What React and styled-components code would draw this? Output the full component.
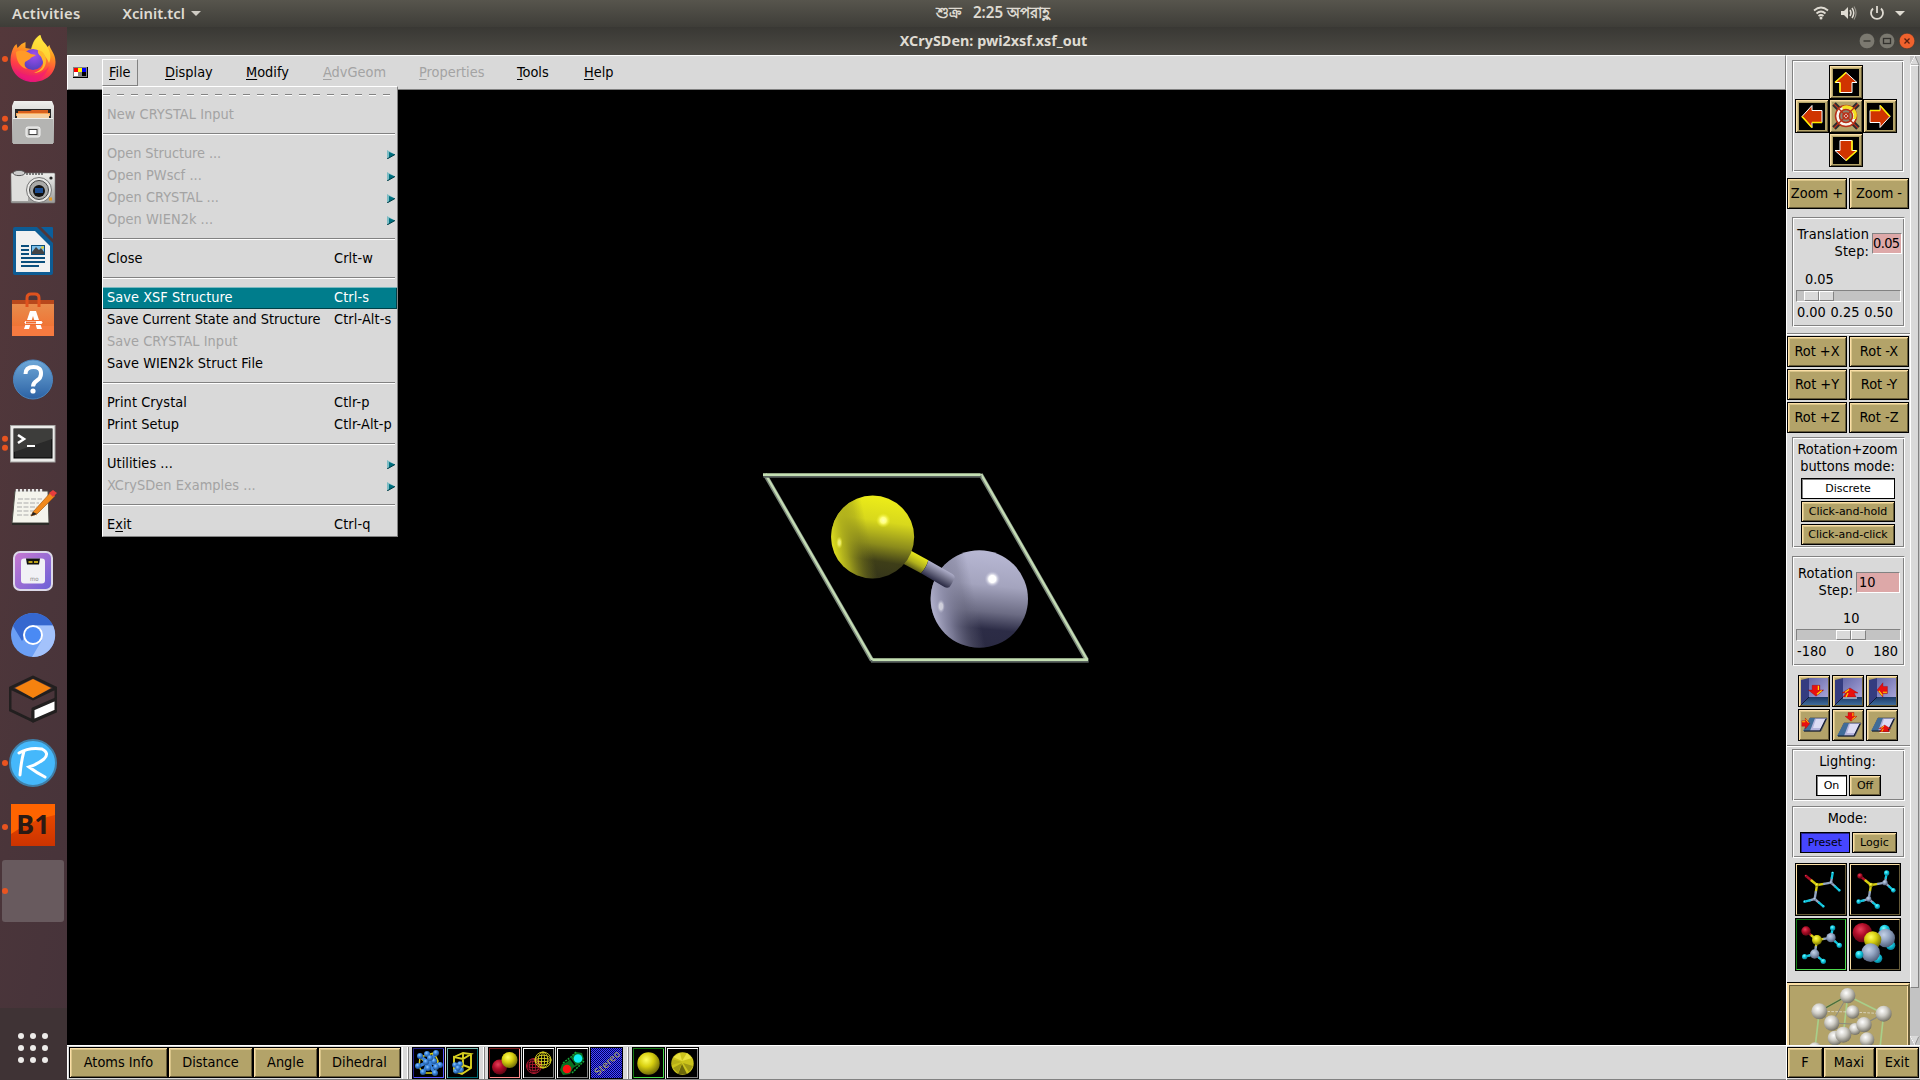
import React from "react";
import styled, { createGlobalStyle, css } from "styled-components";

const GREY = "#d9d9d9";
const SHADE = "#828282";
const TAN = "#b3a369";
const UI = `"DejaVu Sans Condensed", "DejaVu Sans", sans-serif`;
const SMALL = `"DejaVu Sans", sans-serif`;
const SHELL = `"Noto Sans", "Open Sans", sans-serif`;

const Global = createGlobalStyle`
  * { box-sizing: border-box; }
  html, body { margin: 0; padding: 0; background: #000; overflow: hidden; }
  svg { display: block; }
`;

const Screen = styled.div`
  width: 1920px;
  height: 1080px;
  display: flex;
  flex-direction: column;
  overflow: hidden;
  background: #000;
  font: 14.4px ${UI};
  font-stretch: condensed;
  color: #000;
  white-space: nowrap;
`;

/* ---------- shell ---------- */
const TopBar = styled.header`
  height: 27px;
  flex: none;
  display: grid;
  grid-template-columns: 1fr auto 1fr;
  align-items: center;
  background: linear-gradient(#57554d, #3e3d38);
  color: #dfdbd2;
  font: 600 14.8px/27px ${SHELL};
`;
const TopLeft = styled.div`
  display: flex;
  align-items: center;
  padding-left: 12px;
  gap: 42px;
  letter-spacing: 0.25px;
`;
const AppName = styled.span`
  display: flex;
  align-items: center;
  gap: 6px;
  letter-spacing: 0;
`;
const Clock = styled.div`
  display: flex;
  gap: 11px;
  padding-left: 66px;
  font-size: 15.2px;
  line-height: 24px;
  height: 27px;
`;
const TopRight = styled.div`
  display: flex;
  justify-content: flex-end;
  align-items: center;
  padding-right: 14px;
`;

const Body = styled.div`
  flex: 1;
  min-height: 0;
  display: flex;
`;
const Dock = styled.nav`
  width: 67px;
  flex: none;
  display: flex;
  flex-direction: column;
  background: linear-gradient(100deg, #54383b, #4a353a 60%, #46333a);
`;
const DockSlot = styled.div`
  position: relative;
  height: 64px;
  display: flex;
  justify-content: center;
  align-items: center;
  padding-right: 1px;
`;
const ActiveTile = styled.div`
  width: 62px;
  height: 62px;
  border-radius: 3px;
  background: #685a5e;
`;
const Dots = styled.div`
  position: absolute;
  left: 2px;
  top: 50%;
  transform: translateY(-50%);
  display: flex;
  flex-direction: column;
  gap: 2.5px;
`;
const Dot = styled.i`
  width: 6px;
  height: 6px;
  border-radius: 50%;
  background: #e95420;
`;
const AppsButton = styled.div`
  margin-top: auto;
  height: 72px;
  background: #3f3335;
  display: grid;
  grid-template-columns: repeat(3, 6px);
  grid-auto-rows: 6px;
  gap: 6px;
  justify-content: center;
  padding: 25px 1px 0 0;
`;
const AppsDot = styled.i`
  border-radius: 50%;
  background: #eeecea;
`;

/* ---------- window ---------- */
const Window = styled.main`
  flex: 1;
  min-width: 0;
  display: flex;
  flex-direction: column;
`;
const TitleBar = styled.div`
  height: 28px;
  flex: none;
  display: grid;
  grid-template-columns: 1fr auto 1fr;
  align-items: center;
  background: linear-gradient(#393834, #4c4a44);
  color: #dfdbd2;
  font: 700 14.4px/28px ${SHELL};
`;
const Title = styled.span`
  grid-column: 2;
`;
const WindowButtons = styled.div`
  display: flex;
  gap: 4px;
  justify-content: flex-end;
  padding-right: 5px;
`;
const Work = styled.div`
  flex: 1;
  min-height: 0;
  display: flex;
`;
const Left = styled.div`
  width: 1719px;
  display: flex;
  flex-direction: column;
`;
const MenuBar = styled.div`
  height: 35px;
  display: flex;
  align-items: flex-start;
  padding: 3px 0 0 5px;
  background: ${GREY};
  border: 1px solid;
  border-color: #fff ${SHADE} ${SHADE} #fff;
`;
const FlagBox = styled.div`
  padding-top: 8px;
  width: 29px;
`;
const MenuItem = styled.div`
  position: relative;
  height: 27px;
  margin-right: 20px;
  width: ${(p) => p.$w}px;
  padding-left: 6px;
  line-height: 25px;
  border: 1px solid;
  border-color: ${(p) => (p.$open ? `#fff ${SHADE} ${SHADE} #fff` : "transparent")};
  color: ${(p) => (p.$off ? "#a3a3a3" : "#000")};
`;
const Under = styled.span`
  text-decoration: underline;
  text-decoration-thickness: 1px;
  text-underline-offset: 2px;
  text-decoration-skip-ink: none;
`;
const DropDown = styled.div`
  position: absolute;
  z-index: 5;
  left: -1px;
  top: 26px;
  width: 296px;
  background: ${GREY};
  border: 1px solid;
  border-color: #fff ${SHADE} ${SHADE} #fff;
  color: #000;
`;
const Tear = styled.div`
  height: 17px;
  padding-top: 7px;
  &::before {
    content: "";
    display: block;
    width: 292px;
    height: 2px;
    background:
      repeating-linear-gradient(90deg, ${SHADE} 0 7px, transparent 7px 14px) 0 0 / 100% 1px no-repeat,
      repeating-linear-gradient(90deg, #fff 0 7px, transparent 7px 14px) 0 1px / 100% 1px no-repeat;
  }
`;
const Sep = styled.div`
  height: 17px;
  padding-top: 7px;
  &::before {
    content: "";
    display: block;
    width: 292px;
    height: 2px;
    background: linear-gradient(${SHADE} 50%, #fff 50%);
  }
`;
const Row = styled.div`
  height: 22px;
  display: grid;
  grid-template-columns: 227px 1fr auto;
  align-items: center;
  line-height: 20px;
  padding: 0 2px 2px 4px;
  color: ${(p) => (p.$off ? "#a3a3a3" : "#000")};
  ${(p) =>
    p.$sel &&
    css`
      background: #007d8c;
      color: #fff;
      box-shadow: inset 0 1px #79b9c0, inset -1px -1px #003f47;
    `}
`;
const RowLabel = styled.span`
  letter-spacing: ${(p) => (p.$tight ? -0.07 : 0.05)}px;
`;
const RowKey = styled.span`
  letter-spacing: 0.1px;
`;
const Canvas = styled.div`
  flex: 1;
  background: #000;
  padding: 360px 0 0 673px;
`;
const BottomBar = styled.footer`
  height: 35px;
  display: flex;
  background: ${GREY};
  border-top: 1px solid #fff;
  border-bottom: 1px solid ${SHADE};
  padding-top: 1px;
`;
const TextTools = styled.div`
  display: flex;
  width: 336px;
  padding-left: 1px;
  border-left: 1px solid #fff;
  border-right: 1px solid #fff;
`;
const IconTools = styled.div`
  display: flex;
  gap: 1px;
`;
const Divider = styled.div`
  width: 2px;
  margin: 0 3px 0 4px;
  background: linear-gradient(90deg, #fff 50%, ${SHADE} 50%);
`;

/* ---------- buttons ---------- */
const bevel = css`
  border: 1px solid #000;
  box-shadow: inset 1px 1px #fbdfa6, inset -1px -1px #665b38, inset 2px 2px #d8c489;
`;
const Btn = styled.button`
  ${bevel}
  flex: none;
  padding: 0 0 ${(p) => (p.$small ? 0 : 2)}px;
  margin: 0;
  width: ${(p) => p.$w}px;
  height: ${(p) => (p.$small ? 21 : 31)}px;
  font: ${(p) => (p.$small ? `11px ${SMALL}` : `14.4px ${UI}`)};
  font-stretch: ${(p) => (p.$small ? "normal" : "condensed")};
  background: ${(p) => p.$bg || TAN};
  color: #000;
  ${(p) => p.$bg && `box-shadow: inset 1px 1px ${p.$bg === "#fff" ? SHADE : "#24248c"};`}
`;
const IconBtn = styled.button`
  ${bevel}
  flex: none;
  display: flex;
  justify-content: center;
  align-items: center;
  padding: 0;
  width: ${(p) => p.$s}px;
  height: ${(p) => p.$s}px;
  background: ${TAN};
`;
const ToolBtn = styled.button`
  flex: none;
  padding: 0;
  width: 33px;
  height: 32px;
  display: flex;
  align-items: center;
  justify-content: center;
  border: 1px solid #000;
  background: #000;
  box-shadow: inset 1px 1px ${(p) => p.$a}, inset -1px -1px ${(p) => p.$b};
`;
const Tile = styled.button`
  padding: 0;
  width: 52px;
  height: 53px;
  border: 1px solid #000;
  background: #000;
  position: relative;
  &::after {
    content: "";
    position: absolute;
    inset: 0;
    border: 1px solid;
    border-color: ${(p) => (p.$on ? "#147814 #4cda4c #4cda4c #147814" : "#fbdfa6 #665b38 #665b38 #fbdfa6")};
  }
`;

/* ---------- side panel ---------- */
const Side = styled.aside`
  flex: 1;
  background: ${GREY};
  border-top: 1px solid #fff;
  border-left: 1px solid #fff;
  display: flex;
  flex-direction: column;
`;
const SideScroll = styled.div`
  height: 989px;
  display: flex;
  overflow: hidden;
`;
const Column = styled.div`
  width: 123px;
  flex: none;
`;
const groove = css`
  border: 1px solid;
  border-color: ${SHADE} #fff #fff ${SHADE};
  box-shadow: inset 1px 1px #fff, inset -1px -1px ${SHADE};
`;
const Frame = styled.section`
  ${groove}
  width: ${(p) => p.$w || 113}px;
  height: ${(p) => p.$h}px;
  margin: ${(p) => p.$mt || 0}px 0 0 5px;
  padding-top: ${(p) => p.$pt || 3}px;
`;
const Pad = styled.div`
  display: grid;
  grid-template: repeat(3, 34px) / repeat(3, 34px);
  justify-content: start;
  padding-left: 2px;
`;
const PadCell = styled.div`
  grid-area: ${(p) => p.$at};
`;
const Pair = styled.div`
  display: flex;
  gap: 2px;
  margin: ${(p) => p.$mt || 0}px 0 0 ${(p) => p.$ml || 0}px;
`;
const Stack = styled.div`
  display: flex;
  flex-direction: column;
  gap: 2px;
  margin: 3px 0 0 8px;
`;
const Caption = styled.div`
  line-height: 17px;
  text-align: center;
  padding-right: 2px;
`;
const FieldRow = styled.div`
  display: flex;
  align-items: center;
  gap: 3px;
  padding-left: 3px;
`;
const FieldLabel = styled.div`
  width: ${(p) => p.$w}px;
  line-height: 17px;
  letter-spacing: 0.12px;
  display: flex;
  flex-direction: column;
  align-items: flex-end;
`;
const Entry = styled.div`
  width: ${(p) => p.$w}px;
  height: 21px;
  line-height: 18px;
  letter-spacing: ${(p) => (p.$tight ? -0.6 : 0)}px;
  padding-left: ${(p) => (p.$tight ? 0 : 2)}px;
  background: #dda8a8;
  border: 1px solid;
  border-color: ${SHADE} #fff #fff ${SHADE};
`;
const ScaleValue = styled.div`
  line-height: 17px;
  margin-top: 11px;
  padding-left: ${(p) => p.$x}px;
`;
const Trough = styled.div`
  width: 105px;
  height: 12px;
  margin: 2px 0 2px 3px;
  padding-left: ${(p) => p.$x}px;
  background: #c3c3c3;
  border: 1px solid;
  border-color: ${SHADE} #fff #fff ${SHADE};
`;
const Thumb = styled.div`
  width: 30px;
  height: 10px;
  display: flex;
  &::before, &::after {
    content: "";
    flex: 1;
    background: ${GREY};
    border: 1px solid;
    border-color: #fff ${SHADE} ${SHADE} #fff;
  }
`;
const Ticks = styled.div`
  display: flex;
  justify-content: space-between;
  line-height: 17px;
  padding: 0 ${(p) => p.$r}px 0 4px;
`;
const Rule = styled.div`
  height: 2px;
  margin-top: ${(p) => p.$mt}px;
  background: linear-gradient(${SHADE} 50%, #fff 50%);
`;
const IconGrid = styled.div`
  display: grid;
  grid-template-columns: repeat(3, 32px);
  gap: 2px;
  margin: 9px 0 0 11px;
`;
const TileGrid = styled.div`
  display: grid;
  grid-template-columns: 52px 52px;
  gap: 2px;
  margin: 5px 0 0 8px;
`;
const LogoButton = styled.div`
  height: 80px;
  margin-top: 12px;
  border: 2px solid;
  border-color: #fbdfa6 #665b38 #665b38 #fbdfa6;
  outline: 1px solid #000;
  background: ${TAN};
  box-shadow: inset 1px 1px #665b38, inset -1px 0 #fbdfa6;
`;
const ScrollBar = styled.div`
  flex: 1;
  display: flex;
  flex-direction: column;
  background: #c3c3c3;
`;
const ScrollThumb = styled.div`
  height: 923px;
  background: ${GREY};
  border: 1px solid;
  border-color: #fff ${SHADE} ${SHADE} #fff;
  width: 9px;
`;
const ScrollEnd = styled.div`
  margin-top: auto;
`;
const SideFoot = styled.div`
  display: flex;
  border-top: 1px solid #fff;
  padding-top: 1px;
  height: 35px;
  border-bottom: 1px solid ${SHADE};
`;

/* ---------- drawings ---------- */
const DefsSvg = styled.svg`
  position: absolute;
`;
const Defs = () => (
  <DefsSvg width="0" height="0">
    <defs>
      {[
        ["gRed", "#e8405a", "#b00d28", "#5a0412"],
        ["gYel", "#ffff60", "#d8d010", "#6c6808"],
        ["gBlu", "#c4d2e8", "#93a5c2", "#4c5a76"],
        ["gCya", "#80ffff", "#10c8e0", "#067890"],
        ["gWht", "#ffffff", "#cfcdc6", "#6e6b60"],
        ["gSky", "#8cc8ff", "#3a84dc", "#1c4c88"],
      ].map(([id, a, b, c]) => (
        <radialGradient key={id} id={id} cx="0.4" cy="0.33" r="0.7">
          <stop offset="0" stopColor={a} />
          <stop offset="0.45" stopColor={b} />
          <stop offset="1" stopColor={c} />
        </radialGradient>
      ))}
      <linearGradient id="fxBody" x1="0.7" y1="0" x2="0.4" y2="1">
        <stop offset="0" stopColor="#fff04a" />
        <stop offset="0.35" stopColor="#ff9a1f" />
        <stop offset="0.7" stopColor="#ff3f45" />
        <stop offset="1" stopColor="#e0117f" />
      </linearGradient>
      <radialGradient id="fxCore" cx="0.55" cy="0.3" r="0.8">
        <stop offset="0" stopColor="#a04ff0" />
        <stop offset="1" stopColor="#4a3fb8" />
      </radialGradient>
      <linearGradient id="metal" x1="0" y1="0" x2="0" y2="1">
        <stop offset="0" stopColor="#f0f0ee" />
        <stop offset="1" stopColor="#9b9b99" />
      </linearGradient>
      <linearGradient id="bag" x1="0" y1="0" x2="0" y2="1">
        <stop offset="0" stopColor="#e88c4c" />
        <stop offset="1" stopColor="#f26a2c" />
      </linearGradient>
      <linearGradient id="help" x1="0" y1="0" x2="0" y2="1">
        <stop offset="0" stopColor="#6fa8d8" />
        <stop offset="1" stopColor="#2c62a4" />
      </linearGradient>
      <linearGradient id="mo" x1="0" y1="0" x2="1" y2="1">
        <stop offset="0" stopColor="#c878d0" />
        <stop offset="1" stopColor="#6a62d8" />
      </linearGradient>
      <linearGradient id="b1" x1="0" y1="0" x2="0" y2="1">
        <stop offset="0" stopColor="#f05000" />
        <stop offset="1" stopColor="#cc3300" />
      </linearGradient>
      <linearGradient id="floor" x1="0" y1="0" x2="0" y2="1">
        <stop offset="0" stopColor="#1c3866" />
        <stop offset="1" stopColor="#3f6c9c" />
      </linearGradient>
      <linearGradient id="wall" x1="0" y1="0" x2="1" y2="1">
        <stop offset="0" stopColor="#6468a8" />
        <stop offset="1" stopColor="#a8a4d8" />
      </linearGradient>
    </defs>
  </DefsSvg>
);

const Ico = ({ children, s = 48 }) => (
  <svg width={s} height={s} viewBox="0 0 48 48">{children}</svg>
);

const Firefox = () => (
  <Ico>
    <path d="M24 47C11 47 1.500 37 1.500 25c0-6 2-11 4-14l2-2 1 4 4-4 4-2 0 6 6 1c2-8 5-12 9-14 1 6 5 8 7 12l2-2c0 4 6 8 6 17 0 11-9 20-22.500 20z" fill="url(#fxBody)" />
    <path d="M31 0c1 6 5 8 8 13 3 5 3 11 1 15-3-8-9-12-18-14 2-8 5-12 9-14z" fill="#ffe83c" opacity="0.750" />
    <circle cx="24" cy="24.500" r="10.500" fill="url(#fxCore)" />
    <path d="M7 17c6-3 10-1 15 2l5 1c-3 2-5 2-6 4l-5 3c-1 3 0 5 2 7-7-1-11-9-11-17z" fill="#ff9a28" />
    <path d="M29 15c5 1 8 5 8 11 0 7-5 12-12 12 8-3 11-8 8-14-1-4-5-4-4-9z" fill="#ffb72a" />
    <path d="M6 33c6 9 24 12 34-2-3 10-10 15-18 15C14 45 8 39 6 33z" fill="#f0187a" opacity="0.55" />
  </Ico>
);
const Files = () => (
  <Ico>
    <path d="M5 2h38l2 5v37H3V7z" fill="url(#metal)" />
    <rect x="6" y="10" width="36" height="10" fill="#282828" />
    <path d="M9 12h12l2-1h16v7H9z" fill="#d9601e" />
    <rect x="7" y="14" width="34" height="3" fill="#f9a657" />
    <path d="M8 15h32v4H8z" fill="#f6cfa0" />
    <path d="M4 19h40v26H4z" fill="#b4b4b2" />
    <path d="M4 19h40v1H4z" fill="#eee" />
    <rect x="17" y="28" width="14" height="10" rx="2" fill="#d5d5d3" stroke="#f4f4f4" />
    <rect x="20" y="30.500" width="8" height="5" fill="#fff" stroke="#444" />
  </Ico>
);
const Camera = () => (
  <Ico>
    <path d="M3 10h42a1 1 0 0 1 1 1v28a1 1 0 0 1-1 1H3a1 1 0 0 1-1-1V11a1 1 0 0 1 1-1z" fill="url(#metal)" stroke="#777" strokeWidth="0.600" />
    <rect x="3" y="13" width="16" height="25" fill="#dededc" />
    <ellipse cx="10" cy="10" rx="6" ry="2.600" fill="#ccc" stroke="#555" />
    <path d="M17 11h17" stroke="#555" strokeWidth="1.500" strokeDasharray="2 1" />
    <circle cx="30" cy="27" r="12.500" fill="#e8e8e6" stroke="#777" />
    <circle cx="30" cy="27" r="9.500" fill="#a9a9a7" stroke="#444" />
    <circle cx="30" cy="28" r="6" fill="#111" />
    <rect x="26" y="25" width="8" height="5" fill="#1c4c90" />
    <circle cx="42" cy="15" r="1.600" fill="#222" />
    <rect x="40" y="34.500" width="3" height="3" fill="#e59a20" />
  </Ico>
);
const Writer = () => (
  <Ico>
    <path d="M6 0h22l16 16v30a2 2 0 0 1-2 2H6a2 2 0 0 1-2-2V2a2 2 0 0 1 2-2z" fill="#0d5c94" />
    <path d="M7 4h19l15 15v26H7z" fill="#f1f1f1" />
    <path d="M32 0h11a1 1 0 0 1 1 1v11z" fill="#0b5f9c" />
    <g fill="#0b4f7d">
      <rect x="12" y="18" width="8" height="2" /><rect x="12" y="22" width="8" height="2" /><rect x="12" y="26" width="8" height="2" />
      <rect x="12" y="30" width="24" height="2" /><rect x="12" y="34" width="24" height="2" /><rect x="12" y="38" width="18" height="2" />
      <rect x="22" y="18" width="14" height="10" />
    </g>
    <rect x="23" y="19" width="12" height="8" fill="#7cc0ea" />
    <path d="M23 27v-2l4-5 3 3 2-2 3 4v2z" fill="#444" />
    <circle cx="33.500" cy="20.500" r="1.300" fill="#f0d020" />
  </Ico>
);
const Software = () => (
  <Ico>
    <path d="M3 9h42v7H3z" fill="#b8481c" />
    <path d="M3 13h42v32H3z" fill="url(#bag)" />
    <path d="M3 35h42v10H3z" fill="#f67a40" />
    <path d="M18 16V7q0-4 4-4h4q4 0 4 4v9" fill="none" stroke="#e0521e" strokeWidth="3" />
    <path d="M15 38l6-18h6l6 18h-5l-4-13-4 13z" fill="#fff" />
    <rect x="15" y="29.500" width="19" height="4" rx="2" fill="#fff" stroke="#f26a2c" />
    <rect x="17" y="30.500" width="10" height="2" fill="#f26a2c" />
  </Ico>
);
const Help = () => (
  <Ico>
    <circle cx="24" cy="24.500" r="19.500" fill="url(#help)" stroke="#4a86c0" />
    <path d="M16.500 19q0-7 8-7t7.500 7q0 4-4 6.500t-4 6" fill="none" stroke="#fff" strokeWidth="4" />
    <circle cx="24" cy="36" r="2.600" fill="#fff" />
  </Ico>
);
const Term = () => (
  <Ico>
    <rect x="1.500" y="6.500" width="44.500" height="36.500" fill="#ececea" stroke="#a5a5a3" />
    <rect x="5" y="10" width="38" height="29" fill="#2a2a2a" stroke="#000" />
    <path d="M5 10h38v10L5 33z" fill="#3d3d3b" />
    <path d="M9 16l6 4-6 4" fill="none" stroke="#fff" strokeWidth="2.600" />
    <rect x="18" y="26" width="8" height="2" fill="#fff" />
  </Ico>
);
const Notes = () => (
  <Ico>
    <path d="M6 8h33l1 32H3z" fill="#f4f4ec" stroke="#4a4a44" />
    <path d="M3 41h37" stroke="#2c2c28" strokeWidth="2" />
    <g stroke="#aaa" strokeWidth="1.200" strokeDasharray="5 1.500">
      <path d="M9 16h24M8 20h22M8 24h20M8 28h18M8 32h20" />
    </g>
    <path d="M8 6v3M12 6v3M16 6v3M20 6v3M24 6v3M28 6v3M32 6v3" stroke="#e8e8e8" strokeWidth="2.400" />
    <path d="M24 29L42 9l4 4-18 18-6 2z" fill="#f18a1c" stroke="#a85a10" strokeWidth="0.700" />
    <path d="M22 33l2-4 4 2z" fill="#222" />
    <path d="M40 10l4-3 4 3-4 4z" fill="#e63d3d" />
  </Ico>
);
const Mo = () => (
  <Ico>
    <rect x="5" y="5" width="38" height="38" rx="6" fill="url(#mo)" stroke="#dcd8e8" strokeWidth="2" />
    <rect x="12" y="11.500" width="24" height="25" rx="3" fill="#f1f1f5" />
    <path d="M17 11.500h14l-1 6H18z" fill="#111" />
    <path d="M19.500 15h4M25 15h4" stroke="#f5d21c" strokeWidth="1.500" />
    <text x="21" y="33.500" fontSize="6" fontFamily="DejaVu Sans" fill="#888">mo</text>
  </Ico>
);
const Chromium = () => (
  <Ico>
    <circle cx="24" cy="24" r="22" fill="#6b9ff5" />
    <path d="M24 2a22 22 0 0 1 20 12.500L24 14.500 13 30 4 15A22 22 0 0 1 24 2z" fill="#3567cf" />
    <path d="M44 14.500A22 22 0 0 1 23 46l10-17q2-8-6-14.500z" fill="#a3c2fb" />
    <circle cx="24" cy="24" r="10" fill="#fff" />
    <circle cx="24" cy="24" r="8" fill="#4a8af4" />
  </Ico>
);
const Cube = () => (
  <Ico>
    <path d="M1 13L24 2l23 11-23 11zM1 13v22l23 11 23-12V13M24 36v10" fill="none" stroke="#221f1f" strokeWidth="3" strokeLinejoin="round" />
    <path d="M6 13l18-9 18 9-18 10z" fill="#f5820f" />
    <path d="M24 34l23-10v12L24 46z" fill="#fff" stroke="#221f1f" strokeWidth="3" strokeLinejoin="round" />
  </Ico>
);
const RLogo = () => (
  <Ico>
    <circle cx="24" cy="24" r="23" fill="#45b8fb" stroke="#3f7fa8" strokeWidth="2" />
    <path d="M15 12q-3 11-4 24M10 14q10-6 23-4 8 4 2 10-6 5-15 8 8 6 16 10" fill="none" stroke="#fff" strokeWidth="3" strokeLinecap="round" />
  </Ico>
);
const B1 = () => (
  <Ico>
    <rect x="2" y="1" width="44" height="42" fill="url(#b1)" />
    <path d="M2 1h44v11Q22 17 2 31z" fill="#ff6400" />
    <text x="24" y="30.500" textAnchor="middle" fontSize="27" fontWeight="700" fontFamily="Noto Sans" fontStretch="normal" fill="#2b1a14">B1</text>
  </Ico>
);

/* arrow for the translation pad, pointing up before rotation */
const PadArrow = ({ r }) => (
  <svg width="26" height="27" viewBox="-13 -13.500 26 27">
    <rect x="-13" y="-13.500" width="26" height="27" fill="#000" />
    <g transform={`rotate(${r})`}>
      <path d="M0-10L11 0 H6V10H-6V0H-11z" fill="#d03400" stroke="#fff" strokeWidth="1" />
      <path d="M-11 0L0-10M-6 0V10" fill="none" stroke="#ffee00" strokeWidth="1.600" />
    </g>
  </svg>
);
const Target = () => (
  <svg width="28" height="28" viewBox="-14 -14 28 28">
    <path d="M-12-12L12 12M12-12L-12 12" stroke="#2c2c30" strokeWidth="5" />
    <circle r="10.500" fill="#f8f6ee" stroke="#b83018" strokeWidth="1.500" />
    <path d="M-4-9.500A10 10 0 0 1 10 3L7 3A7 7 0 0 0-3-6z" fill="#f4e020" />
    <circle r="6.500" fill="#8c8674" stroke="#b83018" strokeWidth="1.500" />
    <circle r="3" fill="#fff" stroke="#b83018" strokeWidth="1.500" />
    <path d="M-12-12L12 12M12-12L-12 12" stroke="#b83018" strokeWidth="1.200" />
  </svg>
);

const RedArrow = ({ x, y, r = 0, k = 1 }) => (
  <g transform={`translate(${x} ${y}) rotate(${r}) scale(${k})`}>
    <path d="M0-5.500L8 1H4V6H-4V1H-8z" fill="#e81010" stroke="#900" strokeWidth="0.400" />
    <path d="M-6 0.500L-1-3.500M-2.500 1V5.500" stroke="#ffd800" strokeWidth="1.300" fill="none" />
  </g>
);
const FlatArrow = ({ x, y, k = 1 }) => (
  <g transform={`translate(${x} ${y}) scale(${k})`}>
    <path d="M1-4L9 1H5L7 5H-6L-3 1H-7z" fill="#e81010" stroke="#900" strokeWidth="0.400" />
    <path d="M-4 0.500L0-2.500M-1 1L-3 5" stroke="#ffd800" strokeWidth="1.200" fill="none" />
    <path d="M-6 6H8" stroke="#fff" />
  </g>
);
const Room = ({ children }) => (
  <svg width="27" height="27" viewBox="0 0 27 27">
    <path d="M0 2L8 0V19L0 27z" fill="#343c80" />
    <path d="M8 0H27V19H8z" fill="url(#wall)" />
    <path d="M8 19H27V27H0z" fill="url(#floor)" />
    <path d="M0 27L8 19" stroke="#101c38" />
    {children}
  </svg>
);
const Slab = ({ children, d = 0 }) => (
  <svg width="28" height="28" viewBox="0 0 28 28">
    <g transform={`translate(0 ${d})`}>
      <path d="M10 7H27L21 20H4z" fill="#b4b4dc" stroke="#222c48" strokeWidth="0.600" />
      <path d="M10 7h5L10 20H3z" fill="#406c98" />
      <path d="M16 8h9l-4 9h-8z" fill="#dcdcf4" />
      <path d="M4 20H20L26 8" stroke="#101828" strokeWidth="1.200" fill="none" />
    </g>
    {children}
  </svg>
);

/* stick / ball molecule previews */
const ATOMS = [
  ["gRed", 33, 39], ["gYel", 66, 66], ["gBlu", 108, 59], ["gCya", 113, 30],
  ["gCya", 133, 82], ["gBlu", 59, 108], ["gCya", 29, 116], ["gCya", 85, 130],
];
const BONDS = [
  [0, 1, "#b00d28", "#d8d010"], [1, 2, "#d8d010", "#93a5c2"], [2, 3, "#93a5c2", "#10c8e0"],
  [2, 4, "#93a5c2", "#10c8e0"], [1, 5, "#d8d010", "#93a5c2"], [5, 6, "#93a5c2", "#10c8e0"], [5, 7, "#93a5c2", "#10c8e0"],
];
const Molecule = ({ radii, w }) => (
  <svg width="50" height="51" viewBox="3 3 150 153">
    {BONDS.map(([a, b, c1, c2], i) => {
      const [, x1, y1] = ATOMS[a], [, x2, y2] = ATOMS[b];
      const mx = (x1 + x2) / 2, my = (y1 + y2) / 2;
      return (
        <g key={i} strokeWidth={w} strokeLinecap="round">
          <path d={`M${x1} ${y1}L${mx} ${my}`} stroke={c1} />
          <path d={`M${mx} ${my}L${x2} ${y2}`} stroke={c2} />
        </g>
      );
    })}
    {ATOMS.map(([g, x, y], i) => <circle key={i} cx={x} cy={y} r={radii[i]} fill={`url(#${g})`} />)}
  </svg>
);
const SpaceFill = () => (
  <svg width="50" height="51" viewBox="3 3 150 153">
    {[["gCya", 107, 36, 16], ["gCya", 125, 82, 14], ["gRed", 40, 44, 29], ["gBlu", 110, 60, 28], ["gYel", 71, 66, 26],
      ["gCya", 86, 121, 14], ["gBlu", 65, 104, 28], ["gCya", 31, 110, 12]].map(([g, x, y, r], i) => (
      <circle key={i} cx={x} cy={y} r={r} fill={`url(#${g})`} />
    ))}
  </svg>
);

const Logo = () => (
  <svg width="119" height="70" viewBox="27 976 357 210">
    <path d="M203 1008L118 1055 105 1165M203 1008L311 1062 300 1165M203 1008L190 1125" stroke="#a8cf8a" strokeWidth="5" fill="none" />
    <path d="M203 1008L118 1055" stroke="#4f6a3a" strokeWidth="4" />
    <path d="M155 1090L252 1095M118 1055L190 1125M311 1062L190 1125M155 1090L203 1008M252 1095L215 1057M252 1095L311 1062" stroke="#8a8a80" strokeWidth="3" />
    <path d="M118 1055L215 1057 311 1062" stroke="#e8e8e0" strokeWidth="2" strokeDasharray="8 4" fill="none" />
    {[[218, 1057, 20], [165, 1135, 22], [225, 1108, 18], [261, 1140, 22], [203, 1008, 23], [118, 1055, 24], [311, 1062, 24],
      [155, 1090, 23], [252, 1095, 23], [190, 1125, 24], [105, 1168, 20], [300, 1175, 20]].map(([x, y, r], i) => (
      <circle key={i} cx={x} cy={y} r={r} fill="url(#gWht)" />
    ))}
  </svg>
);

/* the two-atom cell in the viewer */
const Scene = () => (
  <svg width="370" height="230" viewBox="0 0 1110 690">
    <defs>
      <linearGradient id="yBase" x1="0.6" y1="0" x2="0.45" y2="1">
        <stop offset="0" stopColor="#eeee18" />
        <stop offset="0.3" stopColor="#d8d81c" />
        <stop offset="0.58" stopColor="#8c8c1c" />
        <stop offset="0.78" stopColor="#3e3e18" />
        <stop offset="1" stopColor="#34341a" />
      </linearGradient>
      <linearGradient id="wBase" x1="0.55" y1="0" x2="0.45" y2="1">
        <stop offset="0" stopColor="#b8b8d4" />
        <stop offset="0.35" stopColor="#a4a4be" />
        <stop offset="0.62" stopColor="#6c6c84" />
        <stop offset="0.8" stopColor="#2c2c46" />
        <stop offset="1" stopColor="#2a2a42" />
      </linearGradient>
      <linearGradient id="yRim" x1="0" y1="0.600" x2="0.460" y2="0.500">
        <stop offset="0" stopColor="#e4e420" />
        <stop offset="0.35" stopColor="#b0b01c" stopOpacity="0.850" />
        <stop offset="0.75" stopColor="#84841c" stopOpacity="0.350" />
        <stop offset="1" stopColor="#80801c" stopOpacity="0" />
      </linearGradient>
      <linearGradient id="wRim" x1="0" y1="0.600" x2="0.460" y2="0.500">
        <stop offset="0" stopColor="#b4b4d0" />
        <stop offset="0.35" stopColor="#8c8ca8" stopOpacity="0.800" />
        <stop offset="0.75" stopColor="#68687e" stopOpacity="0.350" />
        <stop offset="1" stopColor="#6c6c84" stopOpacity="0" />
      </linearGradient>
      <radialGradient id="yHi"><stop offset="0" stopColor="#ffffb0" /><stop offset="0.4" stopColor="#ffff80" /><stop offset="1" stopColor="#eeee20" stopOpacity="0" /></radialGradient>
      <radialGradient id="wHi"><stop offset="0" stopColor="#fff" /><stop offset="0.45" stopColor="#fff" /><stop offset="1" stopColor="#b8b8d4" stopOpacity="0" /></radialGradient>
      <linearGradient id="yBond" gradientUnits="userSpaceOnUse" x1="545" y1="322" x2="522" y2="364">
        <stop offset="0" stopColor="#e4e41c" /><stop offset="0.5" stopColor="#b0b01c" /><stop offset="1" stopColor="#4c4c18" />
      </linearGradient>
      <linearGradient id="wBond" gradientUnits="userSpaceOnUse" x1="605" y1="350" x2="582" y2="392">
        <stop offset="0" stopColor="#b8b8d4" /><stop offset="0.5" stopColor="#74748c" /><stop offset="1" stopColor="#2c2c46" />
      </linearGradient>
    </defs>
    <g fill="none">
      <path d="M75 73L396 631M722 73L1041 631" stroke="#7c887c" strokeWidth="13" />
      <path d="M76 72L397 630M723 72L1042 630" stroke="#c4dcb4" strokeWidth="7" />
      <path d="M70 79H724M393 634H1046" stroke="#58625e" strokeWidth="8" />
      <path d="M69 74H722M397 629H1044" stroke="#c3deb2" strokeWidth="8" />
    </g>
    <circle cx="718" cy="447" r="146" fill="url(#wBase)" />
    <circle cx="718" cy="447" r="146" fill="url(#wRim)" />
    <path d="M513 302L565 331Q558 354 543 370L490 341z" fill="url(#yBond)" />
    <path d="M565 331L636 371Q648 378 642 388 636 402 628 412 618 416 608 408L543 370Q560 352 565 331z" fill="url(#wBond)" />
    <circle cx="398" cy="261" r="124.500" fill="url(#yBase)" />
    <circle cx="398" cy="261" r="124.500" fill="url(#yRim)" />
    <circle cx="430" cy="211" r="22" fill="url(#yHi)" />
    <ellipse cx="298" cy="278" rx="10" ry="19" fill="url(#yHi)" opacity="0.700" />
    <circle cx="757" cy="387" r="24" fill="url(#wHi)" />
    <ellipse cx="603" cy="469" rx="12" ry="21" fill="url(#wHi)" opacity="0.550" />
  </svg>
);

/* tool bar pictures */
const T = ({ children }) => <svg width="29" height="28" viewBox="0 0 29 28">{children}</svg>;
const Cluster = () => (
  <T>
    <path d="M6 8L20 4 24 12 21 24 9 24 5 18zM6 8L21 24M20 4L9 24" stroke="#d8d020" strokeWidth="1.500" fill="none" />
    <path d="M7 8L14 13 22 5M10 23L14 13 20 23M5 17L14 13 25 16M14 13V20" stroke="#3a84dc" strokeWidth="3.200" fill="none" />
    {[[6, 7], [13, 5], [22, 4], [20, 12], [26, 16], [4, 17], [14, 19], [21, 24], [9, 23], [12, 13], [16, 9], [22, 18]].map(([x, y], i) => (
      <circle key={i} cx={x} cy={y} r="3" fill="url(#gSky)" />
    ))}
  </T>
);
const CellCube = () => (
  <T>
    <path d="M6 8L15 4 23 5 15 10 6 8V22L14 25 23 19V5M15 10L14 25M6 20L15 16 23 19M15 4V16" fill="none" stroke="#d8d020" strokeWidth="1.900" />
    <path d="M7 17l5-3M7 21l5 2M12 14v9" stroke="#3a84dc" strokeWidth="2.500" />
    {[[7, 16], [12, 15], [8, 22], [13, 21], [10, 19]].map(([x, y], i) => <circle key={i} cx={x} cy={y} r="2.800" fill="url(#gSky)" />)}
  </T>
);
const TwoBalls = () => (
  <T>
    <circle cx="9.500" cy="18" r="7.500" fill="url(#gRed)" />
    <circle cx="19.500" cy="11" r="8" fill="url(#gYel)" />
  </T>
);
const Wire = ({ x, y, r, c }) => (
  <g fill="none" stroke={c} strokeWidth="0.900">
    <circle cx={x} cy={y} r={r} /><ellipse cx={x} cy={y} rx={r * 0.6} ry={r} /><ellipse cx={x} cy={y} rx={r} ry={r * 0.6} />
    <ellipse cx={x} cy={y} rx={r * 0.2} ry={r} /><ellipse cx={x} cy={y} rx={r} ry={r * 0.2} />
  </g>
);
const Glasses = () => (
  <T>
    <path d="M4 15L9 13 14 8 18 3 24 4 26 10 22 15 15 19 12 25 5 26 2 21z" fill="#0a7020" />
    <path d="M5 14L13 8 18 3M14 24L26 12" stroke="#18a838" strokeWidth="1.500" strokeDasharray="2 1" fill="none" />
    <path d="M12 9l5 7" stroke="#000" strokeWidth="1.500" />
    <circle cx="9" cy="20" r="4.300" fill="#ff1010" /><circle cx="20" cy="9.500" r="4.300" fill="#10f0f0" />
  </T>
);
const Stereo = () => (
  <svg width="31" height="30" viewBox="0 0 31 30">
    <defs>
      <pattern id="dith" width="2" height="2" patternUnits="userSpaceOnUse">
        <rect width="2" height="2" fill="#000060" /><rect width="1" height="1" fill="#4646ff" /><rect x="1" y="1" width="1" height="1" fill="#4646ff" />
      </pattern>
    </defs>
    <rect width="31" height="30" fill="url(#dith)" />
    <text transform="translate(7 28) rotate(-43)" fontFamily="DejaVu Sans" fontSize="9.500" fill="#b4ac60">Stereo</text>
  </svg>
);
const Ball = () => <T><circle cx="14.500" cy="14.500" r="11.200" fill="url(#gYel)" /></T>;
const FacetBall = () => (
  <T>
    <circle cx="14.500" cy="14.500" r="11.200" fill="#ccc41c" />
    <path d="M14 12L5 8 12 4zM14 12L19 4 24 9z" fill="#e8e240" />
    <path d="M14 14L5 19 10 24zM15 14L25 17 21 23z" fill="#a09a14" />
    <path d="M14 15L10 25 19 25z" fill="#6c680c" />
    <path d="M14 13L4 10 4 16z" fill="#b8b018" />
  </T>
);

const SubArrow = () => (
  <svg width="8" height="9" viewBox="0 0 8 9">
    <path d="M0 0L8 4.500 0 9z" fill="#7cbcc4" />
    <path d="M2 2L8 4.500 0 9 2 7.500z" fill="#007080" />
    <path d="M0 9L8 4.500" stroke="#003c44" />
  </svg>
);
const ArrowCell = styled.span`
  padding-top: 3px;
`;

const MENU = [
  [{ t: "New CRYSTAL Input", off: 1 }],
  [{ t: "Open Structure ...", off: 1, sub: 1, tight: 1 }, { t: "Open PWscf ...", off: 1, sub: 1 }, { t: "Open CRYSTAL ...", off: 1, sub: 1 }, { t: "Open WIEN2k ...", off: 1, sub: 1 }],
  [{ t: "Close", k: "Crlt-w" }],
  [{ t: "Save XSF Structure", k: "Ctrl-s", sel: 1 }, { t: "Save Current State and Structure", k: "Ctrl-Alt-s", tight: 1 }, { t: "Save CRYSTAL Input", off: 1 }, { t: "Save WIEN2k Struct File" }],
  [{ t: "Print Crystal", k: "Ctlr-p" }, { t: "Print Setup", k: "Ctlr-Alt-p" }],
  [{ t: "Utilities ...", sub: 1 }, { t: "XCrySDen Examples ...", off: 1, sub: 1 }],
  [{ t: <>E<Under>x</Under>it</>, k: "Ctrl-q" }],
];

const FileMenu = () => (
  <DropDown>
    <Tear />
    {MENU.map((group, i) => (
      <React.Fragment key={i}>
        {i > 0 && <Sep />}
        {group.map((m, j) => (
          <Row key={j} $off={m.off} $sel={m.sel}>
            <RowLabel $tight={m.tight}>{m.t}</RowLabel>
            <RowKey>{m.k}</RowKey>
            {m.sub ? <ArrowCell><SubArrow /></ArrowCell> : <span />}
          </Row>
        ))}
      </React.Fragment>
    ))}
  </DropDown>
);

const BAR = [
  ["D", "isplay", 61], ["M", "odify", 57], ["A", "dvGeom", 76, 1], ["P", "roperties", 78, 1], ["T", "ools", 47], ["H", "elp", 43],
];
const DOCK = [
  [Firefox, 1], [Files, 2], [Camera, 0], [Writer, 0], [Software, 0], [Help, 0], [Term, 2],
  [Notes, 0], [Mo, 0], [Chromium, 0], [Cube, 0], [RLogo, 1], [B1, 1], [null, 1],
];

const StatusIcons = () => (
  <svg width="96" height="27" viewBox="1810 0 96 27" fill="none" stroke="#dfdbd2">
    <g strokeWidth="1.800">
      <path d="M1814 10.500q7-6 14 0M1816.500 13.500q4.500-4 9 0M1818.500 16q2.500-2 5 0" />
      <circle cx="1821" cy="18" r="1.500" fill="#dfdbd2" stroke="none" />
      <path d="M1841 11h3l4-4v12l-4-4h-3z" fill="#dfdbd2" stroke="none" />
      <path d="M1850 10q2 3 0 6" strokeWidth="1.500" /><path d="M1852 8q3.500 5 0 10" strokeWidth="1.500" />
      <path d="M1854 6.500q4 6.500 0 13" strokeWidth="1.200" opacity="0.500" />
      <path d="M1873 8.500a6 6 0 1 0 8 0M1877 6v7" />
    </g>
    <path d="M1895 11h10l-5 5z" fill="#dfdbd2" stroke="none" />
  </svg>
);

const WinBtn = ({ close, children }) => (
  <svg width="16" height="16" viewBox="0 0 16 16">
    <circle cx="8" cy="8" r="7.800" fill={close ? "#f0622d" : "#7b7970"} stroke="#33322e" strokeWidth="0.500" />
    <g stroke={close ? "#5a2010" : "#33322e"} strokeWidth="1.300" fill="none">{children}</g>
  </svg>
);

export default function App() {
  return (
    <Screen>
      <Global />
      <Defs />
      <TopBar>
        <TopLeft>
          <span>Activities</span>
          <AppName>
            Xcinit.tcl
            <svg width="10" height="5" viewBox="0 0 10 5"><path d="M0 0h10L5 5z" fill="#cfccc4" /></svg>
          </AppName>
        </TopLeft>
        <Clock><span>শুক্র</span><span>2:25 অপরাহ্ণ</span></Clock>
        <TopRight><StatusIcons /></TopRight>
      </TopBar>
      <Body>
        <Dock>
          {DOCK.map(([Icon, n], i) => (
            <DockSlot key={i}>
              {Icon ? <Icon /> : <ActiveTile />}
              <Dots>{Array.from({ length: n }, (_, k) => <Dot key={k} />)}</Dots>
            </DockSlot>
          ))}
          <AppsButton>{Array.from({ length: 9 }, (_, k) => <AppsDot key={k} />)}</AppsButton>
        </Dock>
        <Window>
          <TitleBar>
            <Title>XCrySDen: pwi2xsf.xsf_out</Title>
            <WindowButtons>
              <WinBtn><path d="M4.500 8h7" /></WinBtn>
              <WinBtn><rect x="4.500" y="5.500" width="7" height="5" /></WinBtn>
              <WinBtn close><path d="M5.500 5.500l5 5M10.500 5.500l-5 5" /></WinBtn>
            </WindowButtons>
          </TitleBar>
          <Work>
            <Left>
              <MenuBar>
                <FlagBox>
                  <svg width="15" height="11" shapeRendering="crispEdges">
                    <rect width="15" height="11" fill="#000" /><rect width="14" height="10" fill="#828282" />
                    <rect x="1" y="1" width="4" height="4" fill="#f00" /><rect x="5" y="1" width="4" height="4" fill="#ff0" /><rect x="9" y="1" width="4" height="4" fill="#00f" />
                    <rect x="1" y="5" width="4" height="4" fill="#fff" /><rect x="5" y="5" width="4" height="4" fill="#828282" /><rect x="9" y="5" width="4" height="4" fill="#000" />
                  </svg>
                </FlagBox>
                <MenuItem $w={36} $open><Under>F</Under>ile<FileMenu /></MenuItem>
                {BAR.map(([a, b, w, off]) => (
                  <MenuItem key={b} $w={w} $off={off}><Under>{a}</Under>{b}</MenuItem>
                ))}
              </MenuBar>
              <Canvas><Scene /></Canvas>
              <BottomBar>
                <TextTools>
                  <Btn $w={99}>Atoms Info</Btn>
                  <Btn $w={85}>Distance</Btn>
                  <Btn $w={65}>Angle</Btn>
                  <Btn $w={83}>Dihedral</Btn>
                </TextTools>
                <Divider />
                <IconTools>
                  <ToolBtn $a="#24248c" $b="#5a5aff"><Cluster /></ToolBtn>
                  <ToolBtn $a="#7cbcb4" $b="#006a74"><CellCube /></ToolBtn>
                </IconTools>
                <Divider />
                <IconTools>
                  <ToolBtn $a="#7c1c1c" $b="#ff8c8c"><TwoBalls /></ToolBtn>
                  <ToolBtn $a="#fff" $b={SHADE}><T><Wire x={10} y={17} r={7.5} c="#b01830" /><Wire x={19} y={11} r={8} c="#d8d020" /></T></ToolBtn>
                  <ToolBtn $a="#fff" $b={SHADE}><Glasses /></ToolBtn>
                  <ToolBtn $a="#24248c" $b="#5a5aff"><Stereo /></ToolBtn>
                </IconTools>
                <Divider />
                <IconTools>
                  <ToolBtn $a="#147814" $b="#4cda4c"><Ball /></ToolBtn>
                  <ToolBtn $a="#fff" $b={SHADE}><FacetBall /></ToolBtn>
                </IconTools>
              </BottomBar>
            </Left>
            <Side>
              <SideScroll>
                <Column>
                  <Frame $w={112} $h={112} $mt={4} $pt={4}>
                    <Pad>
                      <PadCell $at="1 / 2"><IconBtn $s={34}><PadArrow r={0} /></IconBtn></PadCell>
                      <PadCell $at="2 / 1"><IconBtn $s={34}><PadArrow r={-90} /></IconBtn></PadCell>
                      <PadCell $at="2 / 2"><IconBtn $s={34}><Target /></IconBtn></PadCell>
                      <PadCell $at="2 / 3"><IconBtn $s={34}><PadArrow r={90} /></IconBtn></PadCell>
                      <PadCell $at="3 / 2"><IconBtn $s={34}><PadArrow r={180} /></IconBtn></PadCell>
                    </Pad>
                  </Frame>
                  <Pair $mt={6}><Btn $w={60}>Zoom +</Btn><Btn $w={60}>Zoom -</Btn></Pair>
                  <Frame $h={110} $mt={8} $pt={8}>
                    <FieldRow>
                      <FieldLabel $w={73}><span>Translation</span><span>Step:</span></FieldLabel>
                      <Entry $w={30} $tight>0.05</Entry>
                    </FieldRow>
                    <ScaleValue $x={12}>0.05</ScaleValue>
                    <Trough $x={7}><Thumb /></Trough>
                    <Ticks $r={11}><span>0.00</span><span>0.25</span><span>0.50</span></Ticks>
                  </Frame>
                  <Rule $mt={6} />
                  {["X", "Y", "Z"].map((a, i) => (
                    <Pair key={a} $mt={i ? 2 : 1}><Btn $w={60}>Rot +{a}</Btn><Btn $w={60}>Rot -{a}</Btn></Pair>
                  ))}
                  <Frame $h={111} $mt={4}>
                    <Caption>Rotation+zoom<br />buttons mode:</Caption>
                    <Stack>
                      <Btn $small $w={94} $bg="#fff">Discrete</Btn>
                      <Btn $small $w={94}>Click-and-hold</Btn>
                      <Btn $small $w={94}>Click-and-click</Btn>
                    </Stack>
                  </Frame>
                  <Frame $h={110} $mt={8} $pt={8}>
                    <FieldRow>
                      <FieldLabel $w={57}><span>Rotation</span><span>Step:</span></FieldLabel>
                      <Entry $w={44}>10</Entry>
                    </FieldRow>
                    <ScaleValue $x={50}>10</ScaleValue>
                    <Trough $x={39}><Thumb /></Trough>
                    <Ticks $r={6}><span>-180</span><span>0</span><span>180</span></Ticks>
                  </Frame>
                  <IconGrid>
                    <IconBtn $s={32}><Room><RedArrow x={15} y={13} r={180} k={0.95} /></Room></IconBtn>
                    <IconBtn $s={32}><Room><FlatArrow x={14} y={14} /></Room></IconBtn>
                    <IconBtn $s={32}><Room><RedArrow x={13} y={12} r={-90} k={0.9} /></Room></IconBtn>
                    <IconBtn $s={32}><Slab><RedArrow x={6} y={12.5} r={90} k={0.7} /></Slab></IconBtn>
                    <IconBtn $s={32}><Slab d={5}><RedArrow x={17} y={6} r={180} k={0.75} /></Slab></IconBtn>
                    <IconBtn $s={32}><Slab><FlatArrow x={16} y={17} k={0.75} /></Slab></IconBtn>
                  </IconGrid>
                  <Rule $mt={4} />
                  <Frame $h={52} $mt={2}>
                    <Caption>Lighting:</Caption>
                    <Pair $mt={5} $ml={23}><Btn $small $w={31} $bg="#fff">On</Btn><Btn $small $w={32}>Off</Btn></Pair>
                  </Frame>
                  <Frame $h={52} $mt={5}>
                    <Caption>Mode:</Caption>
                    <Pair $mt={5} $ml={7}><Btn $small $w={50} $bg="#4646ff">Preset</Btn><Btn $small $w={45}>Logic</Btn></Pair>
                  </Frame>
                  <TileGrid>
                    <Tile><Molecule w={7} radii={[4, 6, 5, 4, 4, 5, 4, 4]} /></Tile>
                    <Tile><Molecule w={7} radii={[8, 7, 8, 8, 7, 8, 7, 8]} /></Tile>
                    <Tile $on><Molecule w={7} radii={[14, 15, 14, 8, 8, 14, 8, 8]} /></Tile>
                    <Tile><SpaceFill /></Tile>
                  </TileGrid>
                  <LogoButton><Logo /></LogoButton>
                </Column>
                <ScrollBar>
                  <svg width="10" height="9" viewBox="0 0 10 9"><rect width="10" height="9" fill="#c3c3c3" /><path d="M5 0L0 9H9z" fill="#d9d9d9" stroke="#828282" strokeWidth="0.800" /><path d="M5 0L0 9" stroke="#fff" /></svg>
                  <ScrollThumb />
                  <ScrollEnd>
                    <svg width="10" height="9" viewBox="0 0 10 9"><path d="M0 0H9L5 9z" fill="#d9d9d9" stroke="#828282" strokeWidth="0.800" /><path d="M0 0H9M0 0L5 9" stroke="#fff" /></svg>
                  </ScrollEnd>
                </ScrollBar>
              </SideScroll>
              <SideFoot><Btn $w={36}>F</Btn><Btn $w={52}>Maxi</Btn><Btn $w={44}>Exit</Btn></SideFoot>
            </Side>
          </Work>
        </Window>
      </Body>
    </Screen>
  );
}
